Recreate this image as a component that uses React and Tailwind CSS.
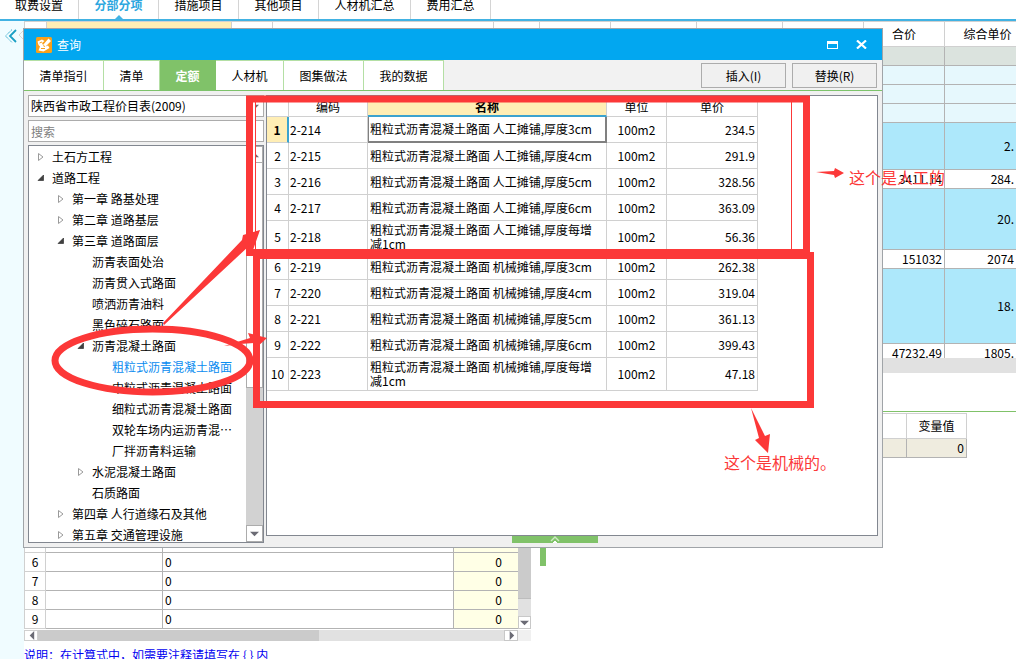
import { useState } from 'react'
import clsx from 'clsx'

const PAGE_TABS = [
  { label: '取费设置', width: 'w-[79px]' },
  { label: '分部分项', width: 'w-[80px]' },
  { label: '措施项目', width: 'w-[80px]' },
  { label: '其他项目', width: 'w-[80px]' },
  { label: '人材机汇总', width: 'w-[92px]' },
  { label: '费用汇总', width: 'w-[80px]' },
]

const DIALOG_TABS = [
  { label: '清单指引', width: 'w-[80px]' },
  { label: '清单', width: 'w-[56px]' },
  { label: '定额', width: 'w-[56px]' },
  { label: '人材机', width: 'w-[68px]' },
  { label: '图集做法', width: 'w-[80px]' },
  { label: '我的数据', width: 'w-[80px]' },
]

const TREE = [
  { label: '土石方工程', level: 0, state: 'closed' },
  { label: '道路工程', level: 0, state: 'open' },
  { label: '第一章 路基处理', level: 1, state: 'closed' },
  { label: '第二章 道路基层', level: 1, state: 'closed' },
  { label: '第三章 道路面层', level: 1, state: 'open' },
  { label: '沥青表面处治', level: 2 },
  { label: '沥青贯入式路面', level: 2 },
  { label: '喷洒沥青油料', level: 2 },
  { label: '黑色碎石路面', level: 2 },
  { label: '沥青混凝土路面', level: 2, state: 'open' },
  { label: '粗粒式沥青混凝土路面', level: 3 },
  { label: '中粒式沥青混凝土路面', level: 3 },
  { label: '细粒式沥青混凝土路面', level: 3 },
  { label: '双轮车场内运沥青混⋯', level: 3 },
  { label: '厂拌沥青料运输', level: 3 },
  { label: '水泥混凝土路面', level: 2, state: 'closed' },
  { label: '石质路面', level: 2 },
  { label: '第四章 人行道缘石及其他', level: 1, state: 'closed' },
  { label: '第五章 交通管理设施', level: 1, state: 'closed' },
]

const INDENT = ['pl-[8px]', 'pl-[28px]', 'pl-[48px]', 'pl-[68px]']

const QUOTAS = [
  { code: '2-214', name: '粗粒式沥青混凝土路面 人工摊铺,厚度3cm', price: '234.5' },
  { code: '2-215', name: '粗粒式沥青混凝土路面 人工摊铺,厚度4cm', price: '291.9' },
  { code: '2-216', name: '粗粒式沥青混凝土路面 人工摊铺,厚度5cm', price: '328.56' },
  { code: '2-217', name: '粗粒式沥青混凝土路面 人工摊铺,厚度6cm', price: '363.09' },
  { code: '2-218', name: '粗粒式沥青混凝土路面 人工摊铺,厚度每增减1cm', price: '56.36', tall: true },
  { code: '2-219', name: '粗粒式沥青混凝土路面 机械摊铺,厚度3cm', price: '262.38' },
  { code: '2-220', name: '粗粒式沥青混凝土路面 机械摊铺,厚度4cm', price: '319.04' },
  { code: '2-221', name: '粗粒式沥青混凝土路面 机械摊铺,厚度5cm', price: '361.13' },
  { code: '2-222', name: '粗粒式沥青混凝土路面 机械摊铺,厚度6cm', price: '399.43' },
  { code: '2-223', name: '粗粒式沥青混凝土路面 机械摊铺,厚度每增减1cm', price: '47.18', tall: true },
]

const COST_ROWS = [
  { look: 'h-[19px] bg-[#dbe3de]' },
  { look: 'h-[19px] bg-[#e6f8fd]' },
  { look: 'h-[19px] bg-[#e6f8fd]' },
  { look: 'h-[19px] bg-[#e6f8fd]' },
  { look: 'h-[47px] bg-[#ade8fb]', unit: '2.' },
  { look: 'h-[19px] bg-white', total: '3411.14', unit: '284.' },
  { look: 'h-[61px] bg-[#ade8fb]', unit: '20.' },
  { look: 'h-[19px] bg-white', total: '151032', unit: '2074' },
  { look: 'h-[75px] bg-[#ade8fb]', unit: '18.' },
  { look: 'h-[19px] bg-white', total: '47232.49', unit: '1805.' },
]

function Arrow({ dir }) {
  const d = {
    up: 'M0 8 L5 3 L10 8 Z',
    down: 'M0 3 L10 3 L5 8 Z',
    left: 'M8 0 L3 5 L8 10 Z',
    right: 'M3 0 L8 5 L3 10 Z',
  }[dir]
  return (
    <svg viewBox="0 0 10 10" className="h-[9px] w-[9px]" aria-hidden="true">
      <path d={d} fill="#6b6b75" />
    </svg>
  )
}

function PageTabs() {
  return (
    <nav className="flex h-[21px] shrink-0 border-b-2 border-[#41b2e3] bg-white">
      {PAGE_TABS.map((tab, i) => (
        <button
          key={tab.label}
          className={clsx(
            'flex shrink-0 flex-col items-center justify-between border-r border-[#d4d4d4]',
            tab.width,
            i === 1 && 'font-bold text-[#2ea7e0]'
          )}
        >
          <span className="leading-[9px]">{tab.label}</span>
          {i === 1 && (
            <svg viewBox="0 0 8 4" className="h-[4px] w-[8px]" aria-hidden="true">
              <path d="M0 4 L4 0 L8 4 Z" fill="#41b2e3" />
            </svg>
          )}
        </button>
      ))}
    </nav>
  )
}

function SideStrip() {
  return (
    <aside className="flex w-[24px] shrink-0 items-start bg-[#f0fcff] pt-[8px] pl-[4px]">
      <svg viewBox="0 0 19 14" className="h-[14px] w-[19px]" fill="none" aria-hidden="true">
        <path d="M8 0.5 L1.5 7 L8 13.5" stroke="#2fa9cc" strokeDasharray="1.2 0.6" />
        <path d="M12 1 L6 7 L12 13" stroke="#1a9fc4" strokeWidth="1.8" />
        <path d="M19 2 L15 6 L19 10" stroke="#d8d8d8" />
      </svg>
    </aside>
  )
}

function CostTable() {
  const cell = 'border-r border-b border-[#b3b3b3] p-0'
  const head = 'border-r border-b border-[#d0d0d0] p-0 font-normal'
  return (
    <div className="h-[337px] shrink-0 overflow-hidden border-t border-l border-[#d0d0d0]">
      <table className="w-full table-fixed border-separate border-spacing-0">
        <colgroup>
          <col className="w-[22px]" />
          <col className="w-[185px]" />
          <col className="w-[41px]" />
          <col className="w-[221px]" />
          <col className="w-[46px]" />
          <col className="w-[71px]" />
          <col className="w-[86px]" />
          <col className="w-[86px]" />
          <col className="w-[81px]" />
          <col className="w-[81px]" />
          <col />
        </colgroup>
        <thead>
          <tr className="h-[25px]">
            <th className={head} />
            <th className={clsx(head, 'bg-[#ffeeb5]')} />
            <th className={head} />
            <th className={head} />
            <th className={head} />
            <th className={head} />
            <th className={head} />
            <th className={head} />
            <th className={head} />
            <th className={head}>合价</th>
            <th className="border-b border-[#d0d0d0] p-0 pl-[14px] font-normal">综合单价</th>
          </tr>
        </thead>
        <tbody>
          {COST_ROWS.map((row, i) => (
            <tr key={i} className={row.look}>
              <td className={cell} colSpan={9} />
              <td className={clsx(cell, 'pr-[2px] text-right')}>{row.total}</td>
              <td className="border-b border-[#b3b3b3] p-0 pr-[2px] text-right">{row.unit}</td>
            </tr>
          ))}
        </tbody>
      </table>
    </div>
  )
}

function FormulaPanel() {
  const line = 'border-r border-b border-[#b3b3b3] p-0'
  return (
    <section className="flex w-[507px] shrink-0 flex-col">
      <div className="flex border-l border-[#d0d0d0] pt-[19px]">
        <table className="w-[493px] shrink-0 table-fixed border-separate border-spacing-0">
          <colgroup>
            <col className="w-[21px]" />
            <col className="w-[117px]" />
            <col />
            <col className="w-[64px]" />
          </colgroup>
          <thead>
            <tr className="h-[26px]">
              <th className={line} />
              <th className={line} />
              <th className={line} />
              <th className={line} />
            </tr>
          </thead>
          <tbody>
            {[1, 2, 3, 4, 5, 6, 7, 8, 9].map((n) => (
              <tr key={n} className="h-[19px]">
                <td className="border-r border-b border-[#d0d0d0] p-0 text-center">{n}</td>
                <td className={line} />
                <td className={clsx(line, 'pl-[2px]')}>0</td>
                <td className="border-b border-[#b3b3b3] bg-[#ffffe6] p-0 pr-[16px] text-right">0</td>
              </tr>
            ))}
          </tbody>
        </table>
        <div className="flex flex-1 flex-col bg-[#e1e1e1]">
          <div className="flex-1 border-b border-[#bdbdbd] bg-[#cbcbcb]" />
          <div className="h-[17px]" />
          <button aria-label="向下" className="flex h-[13px] items-center justify-center border border-[#c8c8c8] bg-white">
            <Arrow dir="down" />
          </button>
        </div>
      </div>
      <div className="flex h-[15px] pt-px">
        <div className="flex w-[494px] bg-[#e1e1e1]">
          <button aria-label="向左" className="flex w-[14px] items-center justify-center border border-[#d0d0d0] bg-white">
            <Arrow dir="left" />
          </button>
          <div className="w-[281px] bg-[#cbcbcb]" />
          <button aria-label="向右" className="ml-auto flex w-[14px] items-center justify-center border border-[#c8c8c8] bg-white">
            <Arrow dir="right" />
          </button>
        </div>
        <div className="flex-1 bg-[#f0f0f0]" />
      </div>
      <p className="pt-[7px] leading-[14px] whitespace-nowrap text-[#0000f0]">
        说明：在计算式中，如需要注释请填写在 {'{ }'} 内
      </p>
    </section>
  )
}

function VariableTable() {
  return (
    <table className="ml-[14px] w-[407px] table-fixed self-start border-separate border-spacing-0">
      <colgroup>
        <col />
        <col className="w-[60px]" />
      </colgroup>
      <thead>
        <tr className="h-[26px]">
          <th className="border border-l-0 border-[#d0d0d0] p-0" />
          <th className="border border-l-0 border-[#d0d0d0] p-0 font-normal">变量值</th>
        </tr>
      </thead>
      <tbody>
        <tr className="h-[19px] bg-[#efecdf]">
          <td className="border-r border-b border-[#b3b3b3] p-0" />
          <td className="border-r border-b border-[#b3b3b3] p-0 pr-[2px] text-right">0</td>
        </tr>
      </tbody>
    </table>
  )
}

function TitleBar() {
  return (
    <header className="flex h-[31px] shrink-0 items-center bg-[#02a7f0] px-[12px] text-white">
      <svg viewBox="0 0 16 16" className="h-[16px] w-[16px]" aria-hidden="true">
        <rect width="16" height="16" rx="1.5" fill="#f9a01b" />
        <path d="M1.5 4.5 L6 2.5 L8.5 4 L6 6 L7 8 L12.5 1.5 L15 4 L9.5 9.5 L12 8.5 L13.5 11 L7.5 14.5 L2.5 13.5 L4 9.5 L2.5 8 Z" fill="#fff" />
        <path d="M3.5 6 L6 5 M5 11.5 L9 11.5 M7.2 8.6 L9 9.5" stroke="#f9a01b" fill="none" />
      </svg>
      <h1 className="ml-[5px] flex-1">查询</h1>
      <button aria-label="最大化" className="mr-[18px]">
        <svg viewBox="0 0 11 8" className="h-[8px] w-[11px]" aria-hidden="true">
          <path d="M0 0 H11 V8 H0 Z M1 3 V7 H10 V3 Z" fill="#fff" fillRule="evenodd" />
        </svg>
      </button>
      <button aria-label="关闭" className="mr-[3px]">
        <svg viewBox="0 0 11 9" className="h-[9px] w-[11px]" aria-hidden="true">
          <path d="M1 0.5 L10 8.5 M10 0.5 L1 8.5" stroke="#fff" strokeWidth="2.2" />
        </svg>
      </button>
    </header>
  )
}

function DialogTabs() {
  const [active, setActive] = useState('定额')
  return (
    <div className="flex h-[31px] shrink-0 items-stretch border-b border-[#7dc36b] bg-[#f2f2f2]">
      {DIALOG_TABS.map((tab) => (
        <button
          key={tab.label}
          onClick={() => setActive(tab.label)}
          className={clsx(
            'shrink-0 border-t border-r',
            tab.width,
            active === tab.label
              ? 'border-[#80c269] bg-[#80c269] font-bold text-white'
              : 'border-[#b4dfa4] bg-white'
          )}
        >
          {tab.label}
        </button>
      ))}
      <div className="ml-auto flex gap-[6px] pt-[3px] pr-[5px] pb-[2px]">
        <button className="w-[85px] border border-[#acacac] bg-[#f0f0f0]">插入(I)</button>
        <button className="w-[85px] border border-[#acacac] bg-[#f0f0f0]">替换(R)</button>
      </div>
    </div>
  )
}

function TreeItem({ item, selected, onSelect }) {
  return (
    <li>
      <button
        onClick={onSelect}
        className={clsx(
          'flex h-[21px] w-full items-center gap-[7px] whitespace-nowrap',
          INDENT[item.level],
          selected && 'text-[#0a8cf0]'
        )}
      >
        <svg viewBox="0 0 8 8" className="h-[8px] w-[8px] shrink-0" aria-hidden="true">
          {item.state === 'closed' && <path d="M1.5 0.5 L6 4 L1.5 7.5 Z" fill="#fff" stroke="#9a9a9a" />}
          {item.state === 'open' && <path d="M6.5 1 V6.5 H1 Z" fill="#404040" stroke="#222" strokeWidth="0.6" />}
        </svg>
        {item.label}
      </button>
    </li>
  )
}

function SidePanel() {
  const [selected, setSelected] = useState('粗粒式沥青混凝土路面')
  return (
    <div className="flex w-[236px] shrink-0 flex-col gap-[3px]">
      <div className="grid h-[22px] shrink-0 grid-cols-1 items-center border border-[#acacac] bg-white">
        <select
          aria-label="定额库"
          className="col-start-1 row-start-1 h-[20px] w-full appearance-none bg-transparent pl-[2px]"
        >
          <option>陕西省市政工程价目表(2009)</option>
        </select>
        <span className="pointer-events-none col-start-1 row-start-1 mr-[4px] justify-self-end">
          <Arrow dir="down" />
        </span>
      </div>
      <input
        aria-label="搜索"
        placeholder="搜索"
        className="h-[22px] shrink-0 border border-[#acacac] bg-white pl-[2px] placeholder:text-[#808080]"
      />
      <div className="flex min-h-0 flex-1 border border-[#828790] bg-white">
        <ul className="min-w-0 flex-1 overflow-hidden">
          {TREE.map((item) => (
            <TreeItem
              key={item.label}
              item={item}
              selected={item.label === selected}
              onSelect={() => setSelected(item.label)}
            />
          ))}
        </ul>
        <div className="flex w-[17px] flex-col bg-[#d2d2d2]">
          <button aria-label="向上" className="flex h-[17px] items-center justify-center border border-[#acacac] bg-white">
            <Arrow dir="up" />
          </button>
          <div className="h-[225px] border border-t-0 border-[#acacac] bg-white" />
          <button aria-label="向下" className="mt-auto flex h-[17px] items-center justify-center border border-[#acacac] bg-white">
            <Arrow dir="down" />
          </button>
        </div>
      </div>
    </div>
  )
}

function QuotaTable() {
  const cell = 'border-r border-b border-[#d0d0d0] p-0'
  return (
    <div className="min-h-0 flex-1 overflow-hidden border border-[#828790] bg-white">
      <table className="w-[491px] table-fixed border-separate border-spacing-0 leading-[14px]">
        <colgroup>
          <col className="w-[22px]" />
          <col className="w-[79px]" />
          <col className="w-[239px]" />
          <col className="w-[60px]" />
          <col className="w-[91px]" />
        </colgroup>
        <thead>
          <tr className="h-[21px]">
            <th className={cell} />
            <th className={clsx(cell, 'pt-[2px] font-normal')}>编码</th>
            <th className="border-r border-b-2 border-r-[#d0d0d0] border-b-[#3ba3cf] bg-[#ffeeb5] p-0 pt-[2px]">名称</th>
            <th className={clsx(cell, 'pt-[2px] font-normal')}>单位</th>
            <th className={clsx(cell, 'pt-[2px] font-normal')}>单价</th>
          </tr>
        </thead>
        <tbody>
          {QUOTAS.map((q, i) => (
            <tr key={q.code} className={q.tall ? 'h-[33px]' : 'h-[26px]'}>
              <td
                className={clsx(
                  'border-b border-b-[#d0d0d0] p-0 text-center',
                  i === 0
                    ? 'border-r-2 border-r-[#3ba3cf] bg-[#ffeeb5] font-bold'
                    : 'border-r border-r-[#d0d0d0]'
                )}
              >
                {i + 1}
              </td>
              <td className={clsx(cell, 'pl-px')}>{q.code}</td>
              <td className={clsx(i === 0 ? 'border-2 border-t-0 border-l border-[#808080] p-0 pl-px' : [cell, 'pr-[6px] pl-[2px]'])}>
                {q.name}
              </td>
              <td className={clsx(cell, 'text-center')}>100m2</td>
              <td className={clsx(cell, 'pr-[2px] text-right')}>{q.price}</td>
            </tr>
          ))}
        </tbody>
      </table>
    </div>
  )
}

function QueryDialog() {
  return (
    <div
      role="dialog"
      aria-label="查询"
      className="absolute top-[28px] right-[133px] bottom-[111px] left-[23px] flex flex-col border border-[#a0a4a8] bg-[#f0f0f0]"
    >
      <TitleBar />
      <DialogTabs />
      <div className="flex min-h-0 flex-1 gap-[2px] pt-[4px] pr-[4px] pl-[4px]">
        <div className="flex pb-[4px]">
          <SidePanel />
        </div>
        <div className="flex min-w-0 flex-1 flex-col">
          <QuotaTable />
          <div className="h-[11px] shrink-0 pl-[246px]">
            <button aria-label="展开" className="flex h-[7px] w-[86px] items-center justify-center bg-[#80c269]">
              <svg viewBox="0 0 10 7" className="h-[7px] w-[10px]" fill="none" aria-hidden="true">
                <path d="M1 5 L5 1 L9 5" stroke="#cfe9c5" strokeWidth="1.4" />
                <path d="M3 7 L5 5 L7 7 Z" fill="#fff" stroke="#fff" />
              </svg>
            </button>
          </div>
        </div>
      </div>
    </div>
  )
}

// red mark-up drawn over the window
function Markup() {
  return (
    <div className="pointer-events-none absolute inset-0 text-[16px] leading-[20px] text-[#fc3838]">
      <svg viewBox="0 0 1016 659" className="h-[659px] w-[1016px]" fill="none" aria-hidden="true">
        <path d="M792 102 H803 V249 H792 Z M253 102 H255 V249 H253 Z" fill="#fff" />
        <path d="M255.5 102 V249 M791.5 102 V249" stroke="#fc3838" />
        <rect x="249.5" y="99" width="557" height="153.5" stroke="#fc3838" strokeWidth="7" />
        <rect x="256.5" y="255.5" width="554" height="149" stroke="#fc3838" strokeWidth="7" />
        <ellipse cx="152.5" cy="360.5" rx="97.5" ry="31.5" stroke="#fc3838" strokeWidth="7" />
        <g fill="#fc3838">
          <path d="M163 323 L242 240 L243 235 L260 230 L253 250 L249 246 L164 325 Z" />
          <path d="M224 346 L250 338 L248 333 L267 338 L257 347 L254 343 L240 344 Z" />
          <path d="M816 172 L834 171 L835 168 L844 173 L835 178 L834 175 Z" />
          <path d="M751 408 L765 436 L770 434 L768 453 L755 440 L759 438 Z" />
        </g>
      </svg>
      <p className="absolute top-[167px] left-[849px] whitespace-nowrap">这个是人工的</p>
      <p className="absolute top-[452px] left-[724px] whitespace-nowrap">这个是机械的。</p>
    </div>
  )
}

export default function App() {
  return (
    <div className="relative flex h-screen flex-col overflow-hidden bg-white font-['Noto_Sans_CJK_SC','Liberation_Sans',sans-serif] text-[12px] leading-[16px] text-black">
      <PageTabs />
      <div className="flex min-h-0 flex-1">
        <SideStrip />
        <main className="flex min-w-0 flex-1 flex-col">
          <CostTable />
          <div className="h-[15px] shrink-0 bg-[#e1e1e1]" />
          <div className="h-[39px] shrink-0 border-b border-[#80c269]" />
          <div className="flex min-h-0 flex-1 pt-px">
            <FormulaPanel />
            <div className="ml-[9px] h-[60px] w-[6px] shrink-0 self-center bg-[#80c269]" />
            <VariableTable />
          </div>
        </main>
      </div>
      <QueryDialog />
      <Markup />
    </div>
  )
}
